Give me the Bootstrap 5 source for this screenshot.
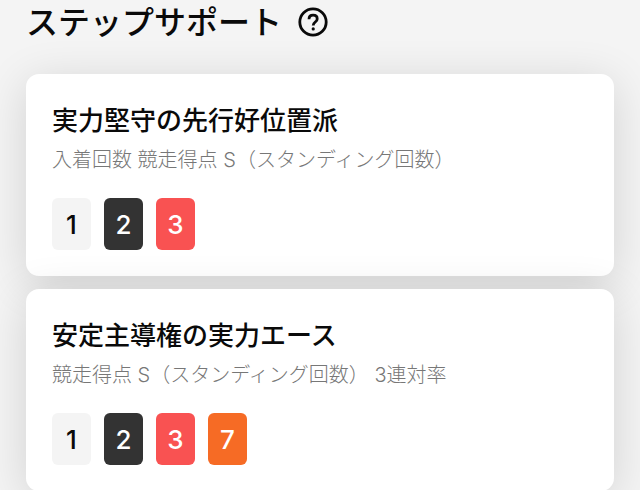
<!DOCTYPE html>
<html lang="ja">
<head>
<meta charset="utf-8">
<meta name="viewport" content="width=device-width, initial-scale=1">
<title>ステップサポート</title>
<link href="https://cdn.jsdelivr.net/npm/bootstrap@5.3.0/dist/css/bootstrap.min.css" rel="stylesheet">
<style>
  body { background: #f4f4f4; color: #0a0a0a; font-family: Inter, "Noto Sans CJK JP", sans-serif; overflow-x: hidden; }
  .support { padding: 1px 26px 0; }
  .support-title { font-size: 32px; line-height: 44px; font-weight: 500; }
  .help { width: 32px; height: 32px; color: inherit; }
  .support-list { gap: 13px; margin-top: 29px; }
  .support-card { --bs-card-border-radius: 13px; padding: 27px 26px 26px; box-shadow: 0 8px 46px rgba(0, 0, 0, .14); }
  .type-name { font-size: 26px; line-height: 40px; font-weight: 500; }
  .type-basis { font-size: 20px; line-height: 38px; font-weight: 300; color: #777; }
  .racers { gap: 13px; margin-top: 19px; }
  .racer { width: 39px; height: 52px; border-radius: 6px; font-size: 26px; line-height: 53px; font-weight: 500; color: #fff; }
  .racer-1 { background: #f4f4f4; color: #0a0a0a; }
  .racer-2 { background: #333; }
  .racer-3 { background: #f95252; }
  .racer-7 { background: #f66b25; }
</style>
</head>
<body>
<main class="support">
  <header class="d-flex align-items-center">
    <h1 class="support-title mb-0">ステップサポート</h1>
    <button type="button" class="help btn p-0 border-0 ms-3 d-flex" aria-label="ヘルプ">
      <svg width="32" height="32" viewBox="0 0 32 32" fill="none" stroke="currentColor" stroke-width="2.8" aria-hidden="true">
        <circle cx="15" cy="15" r="13.2"/>
        <path d="M11 12.200c0-2.400 1.700-4 4.100-4s4.100 1.500 4.100 3.700c0 3.100-4 3.100-4 6.500"/>
        <circle cx="15.200" cy="21.900" r="1.600" fill="currentColor" stroke="none"/>
      </svg>
    </button>
  </header>
  <div class="support-list d-flex flex-column">
    <section class="support-card card border-0">
      <h2 class="type-name mb-0">実力堅守の先行好位置派</h2>
      <p class="type-basis mb-0">入着回数 競走得点 S（スタンディング回数）</p>
      <ul class="racers list-unstyled d-flex mb-0">
        <li class="racer racer-1 text-center">1</li>
        <li class="racer racer-2 text-center">2</li>
        <li class="racer racer-3 text-center">3</li>
      </ul>
    </section>
    <section class="support-card card border-0">
      <h2 class="type-name mb-0">安定主導権の実力エース</h2>
      <p class="type-basis mb-0">競走得点 S（スタンディング回数） 3連対率</p>
      <ul class="racers list-unstyled d-flex mb-0">
        <li class="racer racer-1 text-center">1</li>
        <li class="racer racer-2 text-center">2</li>
        <li class="racer racer-3 text-center">3</li>
        <li class="racer racer-7 text-center">7</li>
      </ul>
    </section>
  </div>
</main>
</body>
</html>
